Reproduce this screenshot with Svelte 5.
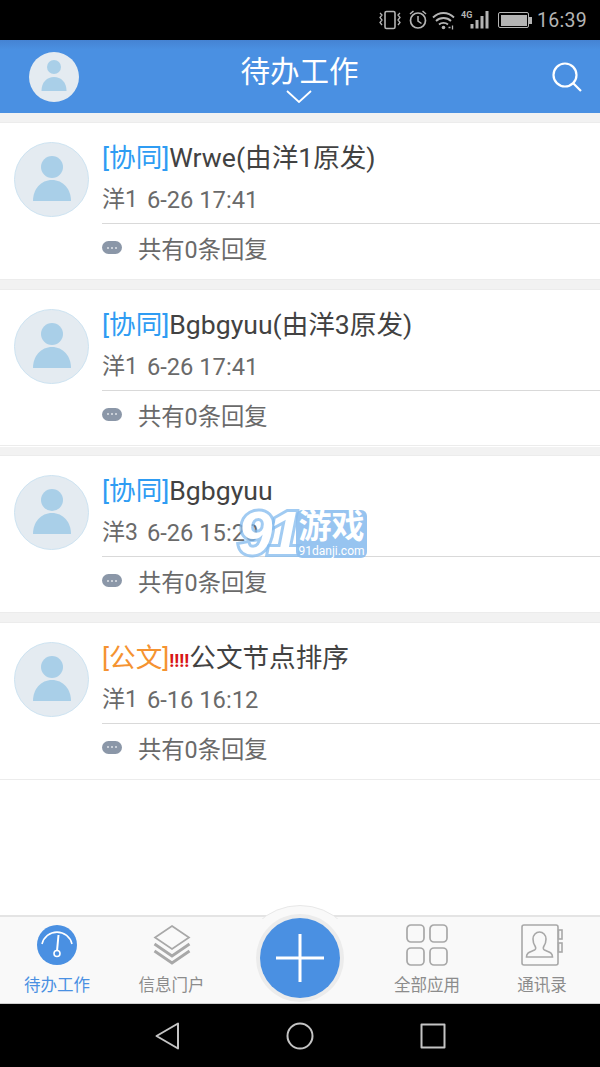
<script>
    const items = [
        { tag: '[协同]', tagClass: 'blue', title: 'Wrwe(由洋1原发)', user: '洋1', time: '6-26 17:41' },
        { tag: '[协同]', tagClass: 'blue', title: 'Bgbgyuu(由洋3原发)', user: '洋1', time: '6-26 17:41' },
        { tag: '[协同]', tagClass: 'blue', title: 'Bgbgyuu', user: '洋3', time: '6-26 15:20' },
        { tag: '[公文]', tagClass: 'orange', urgent: '!!!!', title: '公文节点排序', user: '洋1', time: '6-16 16:12' }
    ];
</script>

<div class="page">
    <div class="status">
        <svg class="st-icons" width="116" height="24" viewBox="0 0 116 24" fill="none" stroke="#b4b4b4">
            <!-- vibrate -->
            <rect x="9" y="3.500" width="10" height="17" rx="1.500" stroke-width="1.600" />
            <path d="M4 5l2 2-2 2.500 2 2.500-2 2.500 2 2.500M24 5l-2 2 2 2.500-2 2.500 2 2.500-2 2.500" stroke-width="1.300" />
            <!-- alarm -->
            <circle cx="42" cy="12.500" r="7.500" stroke-width="1.700" />
            <path d="M42 8V13L45.500 15.500M34 6l3.500-3M50 6l-3.500-3" stroke-width="1.500" />
            <!-- wifi -->
            <path d="M57 9.500c6-6 15-6 21 0M60 13c4-4 11-4 15 0M63 16.500c2.500-2.300 6.500-2.300 9 0" stroke-width="1.800" />
            <circle cx="67.500" cy="19.500" r="1.800" fill="#b4b4b4" stroke="none" />
            <path d="M72.500 19.500h2M76.500 17.500v4" stroke-width="1.300" />
            <!-- signal -->
            <path d="M96 16v4.500M101 12v8.500M106 8v12.500M111 3v17.500" stroke-width="3" />
        </svg>
        <span class="net">4G</span>
        <div class="battery"><div class="level"></div></div>
        <span class="clock">16:39</span>
    </div>

    <header>
        <div class="head-avatar">
            <svg width="30" height="32" viewBox="0 0 30 32" fill="#a9cfe8">
                <circle cx="15" cy="8" r="7" />
                <path d="M2.500 32C2.500 23 8 18 15 18S27.500 23 27.500 32z" />
            </svg>
        </div>
        <div class="head-title">
            <span>待办工作</span>
            <svg width="26" height="13" viewBox="0 0 26 13" fill="none" stroke="#fff" stroke-width="1.800"><path d="M1 1l12 11L25 1" /></svg>
        </div>
        <svg class="search" width="32" height="32" viewBox="0 0 32 32" fill="none" stroke="#fff" stroke-width="2.200">
            <circle cx="14" cy="14" r="11.500" />
            <path d="M22.500 22.500L30 30" />
        </svg>
    </header>

    <main>
        {#each items as item}
            <section class="card">
                <div class="avatar">
                    <svg width="40" height="45" viewBox="0 0 40 45" fill="#a9cfe8">
                        <circle cx="20" cy="11" r="11" />
                        <path d="M1 45C1 33 9 24 20 24S39 33 39 45z" />
                    </svg>
                </div>
                <div class="body">
                    <div class="title"><span class={item.tagClass}>{item.tag}</span>{#if item.urgent}<span class="urgent">{item.urgent}</span>{/if}{item.title}</div>
                    <div class="meta"><span class="user">{item.user}</span><span>{item.time}</span></div>
                    <div class="reply">
                        <div class="bubble"><i></i><i></i><i></i></div>
                        <span>共有0条回复</span>
                    </div>
                </div>
            </section>
        {/each}
    </main>

    <nav class="tabs">
        <div class="tab active">
            <svg width="42" height="42" viewBox="0 0 42 42">
                <circle cx="21" cy="21" r="20" fill="#4a90e2" />
                <path d="M6 20A15.400 15.400 0 0 1 36 20" fill="none" stroke="#fff" stroke-width="1.600" />
                <path d="M21 27L22.500 11" stroke="#fff" stroke-width="2" />
                <circle cx="21" cy="29.500" r="3" fill="#4a90e2" stroke="#fff" stroke-width="1.600" />
            </svg>
            <span>待办工作</span>
        </div>
        <div class="tab">
            <svg width="42" height="42" viewBox="0 0 42 42" fill="none" stroke="#a8a8a8">
                <path d="M21 2L38 13.500 21 25 4 13.500z" stroke-width="1.700" />
                <path d="M3.500 20L21 32 38.500 20" stroke-width="2.800" />
                <path d="M3.500 27L21 39 38.500 27" stroke-width="2.800" />
            </svg>
            <span>信息门户</span>
        </div>
        <div class="plus-slot">
            <div class="bump"><div class="bump-circle"></div></div>
            <div class="plus">
                <svg width="48" height="48" viewBox="0 0 48 48" stroke="#fff" stroke-width="3"><path d="M24 0V48M0 24H48" /></svg>
            </div>
        </div>
        <div class="tab">
            <svg width="42" height="42" viewBox="0 0 42 42" fill="none" stroke="#a8a8a8" stroke-width="1.700">
                <rect x="1" y="1" width="17" height="17" rx="4" />
                <rect x="24" y="1" width="17" height="17" rx="4" />
                <rect x="1" y="24" width="17" height="17" rx="4" />
                <rect x="24" y="24" width="17" height="17" rx="4" />
            </svg>
            <span>全部应用</span>
        </div>
        <div class="tab">
            <svg width="42" height="42" viewBox="0 0 42 42" fill="none" stroke="#a8a8a8" stroke-width="1.600">
                <path d="M37 6V3a2 2 0 0 0-2-2H3a2 2 0 0 0-2 2v36a2 2 0 0 0 2 2h32a2 2 0 0 0 2-2v-11" />
                <path d="M37 28V6" />
                <rect x="37.500" y="6" width="3.500" height="9" />
                <rect x="37.500" y="19" width="3.500" height="9" />
                <path d="M5.500 33c0-5 4-5 8-7 1.500-.8 1.500-2.500.5-4-2-3-2-5-2-7 0-4 3-7 6.500-7s6.500 3 6.500 7c0 2 0 4-2 7-1 1.500-1 3.200.5 4 4 2 8 2 8 7z" />
            </svg>
            <span>通讯录</span>
        </div>
    </nav>

    <div class="sysnav">
        <svg width="24" height="28" viewBox="0 0 24 28" fill="none" stroke="#c4c4c4" stroke-width="2" stroke-linejoin="round"><path d="M23 1.500V26.500L1.500 14z" /></svg>
        <svg width="28" height="28" viewBox="0 0 28 28" fill="none" stroke="#c4c4c4" stroke-width="2"><circle cx="14" cy="14" r="12.500" /></svg>
        <svg width="26" height="26" viewBox="0 0 26 26" fill="none" stroke="#c4c4c4" stroke-width="2" stroke-linejoin="round"><rect x="1.500" y="1.500" width="23" height="23" /></svg>
    </div>

    <!-- site watermark sits over the third card -->
    <div class="mark">
        <span class="nine">91</span>
        <div class="mark-text">
            <span class="game">游戏</span>
            <span class="site">91danji.com</span>
        </div>
    </div>
</div>

<style>
    :global(body) {
        margin: 0;
        background: #fff;
    }

    .page {
        position: relative;
        width: 600px;
        height: 1067px;
        display: flex;
        flex-direction: column;
        overflow: hidden;
        font-family: Roboto, "Noto Sans CJK SC", sans-serif;
    }

    /* Status bar */
    .status {
        position: relative;
        height: 40px;
        flex: none;
        background: #000;
        display: flex;
        align-items: center;
        justify-content: flex-end;
        padding-right: 13px;
        box-sizing: border-box;
    }

    .st-icons {
        position: absolute;
        left: 376px;
        top: 8px;
    }

    .net {
        position: absolute;
        left: 461px;
        top: 10px;
        font-size: 9px;
        line-height: 10px;
        font-weight: 700;
        color: #b4b4b4;
    }

    .battery {
        position: absolute;
        left: 498px;
        top: 12px;
        width: 31px;
        height: 16px;
        border: 1.500px solid #b4b4b4;
        border-radius: 2px;
        padding: 1.500px;
        box-sizing: border-box;
    }

    .battery::after {
        content: '';
        position: absolute;
        left: 30px;
        top: 3.500px;
        width: 2.500px;
        height: 7px;
        background: #b4b4b4;
    }

    .level {
        height: 100%;
        background: #b4b4b4;
    }

    .clock {
        font-size: 19.500px;
        color: #b4b4b4;
        letter-spacing: 0.300px;
    }

    /* Header */
    header {
        position: relative;
        height: 73px;
        flex: none;
        background: linear-gradient(#4583d3 0, #4a90e2 10px);
        display: flex;
        align-items: center;
        justify-content: center;
    }

    .head-avatar {
        position: absolute;
        left: 29px;
        top: 12px;
        width: 50px;
        height: 50px;
        box-sizing: border-box;
        padding-top: 7px;
        border-radius: 50%;
        background: #e4ebf1;
        display: flex;
        justify-content: center;
        overflow: hidden;
    }

    .head-title {
        display: flex;
        flex-direction: column;
        align-items: center;
        color: #fff;
        font-size: 29.500px;
        line-height: 40px;
        margin-top: -5px;
        margin-left: -1px;
    }

    .head-title svg {
        margin-top: -2px;
        margin-bottom: -6px;
    }

    .search {
        position: absolute;
        left: 551px;
        top: 21px;
    }

    /* List */
    main {
        flex: 1;
        background: #fff;
        display: flex;
        flex-direction: column;
        min-height: 0;
        overflow: hidden;
    }

    main::before {
        content: '';
        display: block;
        height: 9px;
        flex: none;
        background: #f2f2f2;
    }

    .card {
        flex: none;
        height: 157.670px;
        box-sizing: border-box;
        background: #fff;
        border-top: 1px solid #ececec;
        border-bottom: 1px solid #ececec;
        margin-bottom: 9px;
        display: flex;
        align-items: flex-start;
        position: relative;
    }

    .card::after {
        content: '';
        position: absolute;
        left: 0;
        right: 0;
        top: 157px;
        height: 9px;
        background: #f2f2f2;
    }

    .card:last-child::after {
        display: none;
    }

    .avatar {
        width: 75px;
        height: 75px;
        box-sizing: border-box;
        margin: 19px 13px 0 14px;
        flex: none;
        border-radius: 50%;
        background: #e4ebf1;
        border: 1px solid #cde3f1;
        display: flex;
        justify-content: center;
        align-items: flex-start;
        padding-top: 13px;
    }

    .body {
        flex: 1;
        min-width: 0;
    }

    .title {
        height: 41px;
        margin-top: 14px;
        font-size: 26.600px;
        line-height: 41px;
        color: #424242;
        white-space: nowrap;
    }

    .blue {
        color: #2e9cf3;
    }

    .orange {
        color: #f59331;
    }

    .urgent {
        color: #d81515;
        font-weight: 700;
        font-size: 18.500px;
    }

    .meta {
        height: 46px;
        box-sizing: border-box;
        border-bottom: 1px solid #d9d9d9;
        display: flex;
        gap: 9px;
        font-size: 23.700px;
        line-height: 44px;
        color: #6a6a6a;
    }

    .user {
        font-size: 23px;
    }

    .reply {
        height: 48px;
        display: flex;
        align-items: center;
        gap: 16px;
        font-size: 23.300px;
        color: #6a6a6a;
    }

    .bubble {
        width: 20px;
        height: 13px;
        border-radius: 7px;
        background: #8b97a8;
        display: flex;
        align-items: center;
        justify-content: center;
        gap: 2px;
        margin-top: -1px;
    }

    .bubble i {
        width: 2px;
        height: 2px;
        background: #dfe3e8;
        border-radius: 50%;
    }

    /* Bottom tabs */
    .tabs {
        position: relative;
        height: 89px;
        flex: none;
        box-sizing: border-box;
        background: #f9f9f9;
        border-top: 2px solid #e4e4e4;
        border-bottom: 1px solid #cfcfcf;
        display: grid;
        grid-template-columns: 114px 115px 141px 114px 116px;
    }

    .tab {
        display: flex;
        flex-direction: column;
        align-items: center;
        padding-top: 7px;
        font-size: 16.500px;
        line-height: 22px;
        color: #8c8c8c;
    }

    .tab span {
        margin-top: 9px;
    }

    .tab.active {
        color: #4a90e2;
    }

    .plus-slot {
        position: relative;
    }

    /* raised arc behind the add button */
    .bump {
        position: absolute;
        left: 0.500px;
        top: -13px;
        width: 140px;
        height: 15px;
        overflow: hidden;
    }

    .bump-circle {
        position: absolute;
        left: 9px;
        top: 1px;
        width: 122px;
        height: 122px;
        box-sizing: border-box;
        border-radius: 50%;
        background: #f9f9f9;
        border: 1px solid #e8e8e8;
    }

    .plus {
        position: absolute;
        left: 30.500px;
        top: 1px;
        width: 80px;
        height: 80px;
        border-radius: 50%;
        background: #4a90e2;
        box-shadow: 0 0 0 4px #ececec;
        display: flex;
        align-items: center;
        justify-content: center;
    }

    .sysnav {
        position: relative;
        height: 63px;
        flex: none;
        background: #000;
        display: flex;
        align-items: center;
    }

    .sysnav svg:nth-child(1) {
        margin-left: 155px;
    }

    .sysnav svg:nth-child(2) {
        margin-left: 107px;
    }

    .sysnav svg:nth-child(3) {
        margin-left: 106px;
    }

    /* Watermark */
    .mark {
        position: absolute;
        left: 238px;
        top: 504px;
        display: flex;
        align-items: flex-start;
        color: #fff;
        pointer-events: none;
    }

    .nine {
        width: 58px;
        font-family: "Liberation Sans", sans-serif;
        font-weight: 700;
        font-style: italic;
        font-size: 62px;
        line-height: 58px;
        letter-spacing: -5px;
        -webkit-text-stroke: 6px rgba(130, 185, 238, 0.75);
        paint-order: stroke fill;
    }

    .mark-text {
        width: 71px;
        height: 48px;
        display: flex;
        flex-direction: column;
        align-items: center;
        margin-top: 6px;
        background: rgba(140, 190, 238, 0.9);
        border-radius: 6px;
    }

    .game {
        font-size: 33px;
        line-height: 34px;
        font-weight: 700;
    }

    .site {
        font-size: 12px;
        line-height: 14px;
    }
</style>
